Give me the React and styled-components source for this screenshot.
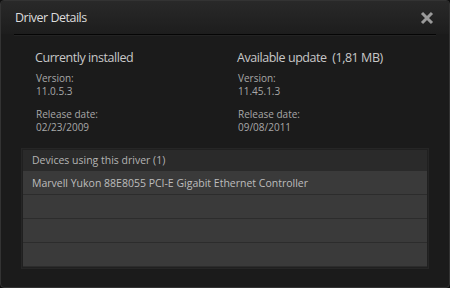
import React from "react";
import styled, { createGlobalStyle } from "styled-components";

const GlobalStyle = createGlobalStyle`
  html, body {
    margin: 0;
    padding: 0;
    background: #0e0e0e;
  }
  body {
    font-family: "Open Sans", "Liberation Sans", sans-serif;
  }
`;

const Window = styled.div`
  width: 450px;
  height: 288px;
  box-sizing: border-box;
  border: 1px solid #333;
  border-radius: 4px;
  background: #1b1b1b;
  display: flex;
  flex-direction: column;
  overflow: hidden;
`;

const TitleBar = styled.div`
  height: 33px;
  padding: 0 14px;
  display: flex;
  align-items: center;
  justify-content: space-between;
  background: linear-gradient(#292929, #1d1d1d);
`;

const Title = styled.h1`
  margin: 0;
  font-size: 12.5px;
  font-weight: 400;
  color: #dcdcdc;
  letter-spacing: -0.5px;
`;

const CloseButton = styled.span`
  cursor: pointer;
  width: 14px;
  height: 14px;
  display: flex;
  margin-right: 1px;
`;

const Separator = styled.div`
  margin: 0 13px;
  height: 1px;
  background: #050505;
  border-bottom: 1px solid #232323;
`;

const Columns = styled.div`
  display: flex;
  padding: 13px 0 0 34px;
  height: 99px;
`;

const Column = styled.div`
  width: ${(p) => p.width}px;
`;

const Heading = styled.h2`
  margin: 0 0 6px;
  font-size: 12.5px;
  font-weight: 400;
  color: #c8c8c8;
  letter-spacing: -0.45px;
  white-space: pre;
`;

const Field = styled.div`
  padding-left: 1px;
  margin-bottom: 10px;
  font-size: 10px;
  line-height: 13px;
  color: #a8a8a8;
`;

const TableFrame = styled.div`
  margin: 0 20px;
  padding: 1px;
  border: 1px solid #262626;
  background: #202020;
`;

const Row = styled.div`
  height: ${(p) => (p.header ? 20 : 23)}px;
  padding-left: 9px;
  display: flex;
  align-items: center;
  font-size: 10.5px;
  color: ${(p) => (p.header ? "#b4b4b4" : "#bdbdbd")};
  background: ${(p) => (p.header ? "#2a2a2a" : "#3a3a3a")};
  border-bottom: 1px solid ${(p) => (p.header ? "#2a2a2a" : "#2c2c2c")};
  white-space: nowrap;
`;

const devices = ["Marvell Yukon 88E8055 PCI-E Gigabit Ethernet Controller", "", "", ""];

const App = () => {
  return (
    <>
      <GlobalStyle />
      <Window>
        <TitleBar>
          <Title>Driver Details</Title>
          <CloseButton>
            <svg width="14" height="14" viewBox="0 0 14 14">
              <path d="M2 2 L12 12 M12 2 L2 12" stroke="#9a9a9a" strokeWidth="3" />
            </svg>
          </CloseButton>
        </TitleBar>
        <Separator />
        <Columns>
          <Column width={202}>
            <Heading>Currently installed</Heading>
            <Field>
              Version:
              <br />
              11.0.5.3
            </Field>
            <Field>
              Release date:
              <br />
              02/23/2009
            </Field>
          </Column>
          <Column width={200}>
            <Heading>Available update  (1,81 MB)</Heading>
            <Field>
              Version:
              <br />
              11.45.1.3
            </Field>
            <Field>
              Release date:
              <br />
              09/08/2011
            </Field>
          </Column>
        </Columns>
        <TableFrame>
          <Row header>Devices using this driver (1)</Row>
          {devices.map((name, i) => (
            <Row key={i}>{name}</Row>
          ))}
        </TableFrame>
      </Window>
    </>
  );
};

export default App;
